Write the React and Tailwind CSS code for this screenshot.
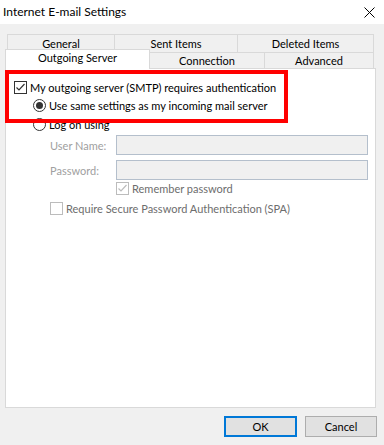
import React from 'react';

function Check({ checked, disabled }) {
  const stroke = disabled ? '#bcbcbc' : '#333333';
  return (
    <span className={`w-[13px] h-[13px] shrink-0 border bg-white flex items-center justify-center ${disabled ? 'border-[#bcbcbc]' : 'border-[#333333]'}`}>
      {checked && (
        <svg width="11" height="11" viewBox="0 0 11 11">
          <path d="M1.5 5.5 L4 8 L9.5 2" fill="none" stroke={stroke} strokeWidth="1.2" />
        </svg>
      )}
    </span>
  );
}

function Radio({ checked }) {
  return (
    <span className="w-[13px] h-[13px] shrink-0 rounded-full border border-[#333333] bg-white flex items-center justify-center">
      {checked && <span className="w-[7px] h-[7px] rounded-full bg-[#333333]" />}
    </span>
  );
}

function Field({ label }) {
  return (
    <div className="flex items-center h-[20px] pl-[44px]">
      <span className="w-[66px] whitespace-nowrap text-[#a0a0a0]">{label}</span>
      <div className="w-[252px] h-[20px] bg-[#f0f0f0] border border-[#b4bfcc]" />
    </div>
  );
}

export default function App() {
  return (
    <div
      className="w-[384px] h-[445px] bg-[#f0f0f0] text-[11px] text-black leading-none overflow-hidden"
      style={{ fontFamily: 'Lato, "Liberation Sans", sans-serif' }}
    >
      {/* title bar */}
      <div className="h-[24px] bg-white flex items-center justify-between pl-[3px] pr-[9px]">
        <span className="text-[12px]">Internet E-mail Settings</span>
        <svg width="11" height="11" viewBox="0 0 11 11">
          <path d="M0.5 0.5 L10.5 10.5 M10.5 0.5 L0.5 10.5" stroke="#000" strokeWidth="1" />
        </svg>
      </div>

      <div className="pl-[5px] pt-[10px]">
        {/* back row of tabs */}
        <div className="ml-[2px] flex h-[18px] w-[367px]">
          <div className="w-[108px] border border-[#d9d9d9] border-b-0 flex items-center justify-center">General</div>
          <div className="w-[123px] border-t border-r border-[#d9d9d9] flex items-center justify-center">Sent Items</div>
          <div className="w-[136px] border-t border-r border-[#d9d9d9] flex items-center justify-center">Deleted Items</div>
        </div>
        {/* front row of tabs */}
        <div className="flex items-end h-[16px] w-[369px] relative z-10">
          <div className="w-[145px] h-[20px] -mb-[1px] bg-white border border-[#d9d9d9] border-b-0 flex items-center justify-center pb-[4px]">
            Outgoing Server
          </div>
          <div className="w-[115px] h-[16px] border-t border-r border-[#d9d9d9] flex items-center justify-center">Connection</div>
          <div className="w-[109px] h-[16px] border-t border-r border-[#d9d9d9] flex items-center justify-center">Advanced</div>
        </div>

        {/* panel */}
        <div className="relative w-[371px] h-[340px] bg-white border border-[#d9d9d9] pt-[11px]">
          <div className="flex items-center gap-[3px] pl-[8px] h-[14px]">
            <Check checked />
            <span>My outgoing server (SMTP) requires authentication</span>
          </div>
          <div className="flex items-center gap-[3px] pl-[27px] h-[14px] mt-[4px]">
            <Radio checked />
            <span>Use same settings as my incoming mail server</span>
          </div>
          <div className="flex items-center gap-[3px] pl-[27px] h-[14px] mt-[5px]">
            <Radio />
            <span>Log on using</span>
          </div>
          <div className="mt-[4px] flex flex-col gap-[5px]">
            <Field label="User Name:" />
            <Field label="Password:" />
          </div>
          <div className="flex items-center gap-[3px] pl-[110px] h-[14px] mt-[1px]">
            <Check checked disabled />
            <span className="text-[#6d6d6d]">Remember password</span>
          </div>
          <div className="flex items-center gap-[3px] pl-[44px] h-[14px] mt-[6px]">
            <Check disabled />
            <span className="text-[#6d6d6d]">Require Secure Password Authentication (SPA)</span>
          </div>

          {/* annotation box */}
          <div className="absolute left-[-1px] top-[1px] w-[283px] h-[53px] border-[4px] border-[#ff0000]" />
        </div>
      </div>

      {/* buttons */}
      <div className="flex justify-end gap-[8px] pr-[7px] mt-[8px]">
        <button className="w-[73px] h-[21px] bg-[#e1e1e1] border-2 border-[#0078d7] text-[11px]">OK</button>
        <button className="w-[72px] h-[21px] bg-[#e1e1e1] border border-[#adadad] text-[11px]">Cancel</button>
      </div>
    </div>
  );
}
